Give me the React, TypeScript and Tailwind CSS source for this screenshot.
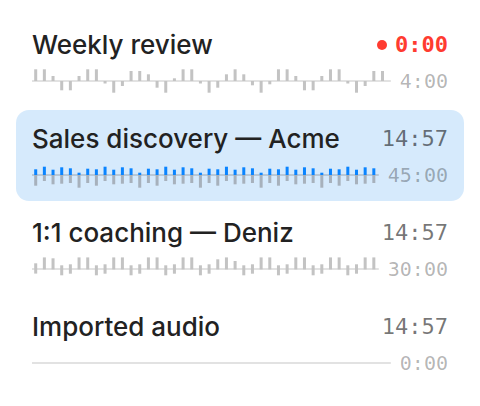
import React from "react";

type Bar = [number, number];

const r1base = [
  11.7, 11.7, 5, -9.3, -9.3, 5, 11.7, 11.7, -2.5, -11.7, -5, 10, 10, 6.7, -6.7,
  -11.7, 2.7, 11.7, 11.7, -2.5, -11.7, -6.7, 6.7, 11.7, 6.7, -4.3, -11.7, -3.3,
];
const row1: Bar[] = Array.from({ length: 41 }, (_, i) => {
  const v = r1base[i % 28];
  return v > 0 ? [v, 0] : [0, -v];
});

const r2base: Bar[] = [
  [5.7, 10.7],
  [8.3, 6],
  [5.3, 9.3],
  [7.7, 8.7],
  [6.7, 8],
  [2.3, 12.7],
  [6.3, 8],
];
const row2: Bar[] = Array.from({ length: 40 }, (_, i) => r2base[i % 7]);

const U: Bar = [11.6, 0.4];
const U2: Bar = [10.7, 0.4];
const D1: Bar = [3.7, 6.3];
const D2: Bar = [4.7, 4.7];
const M: Bar = [5.7, 4.6];
const row3: Bar[] = [
  M, U, U2, D1, D2, U, U, D1, D2, U, U, D1, D2, U, U, D1, D2, U, U, D1, D2,
  [9.7, 0.4], U, [8, 0.4], D1, D2, U, U, D1, D2, U, U, D1, D2, U, U, D1, D2, U, U,
];

type Kind = "plain" | "dual" | "empty";

function Wave({ bars, kind }: { bars: Bar[]; kind: Kind }) {
  const selected = kind === "dual";
  const line = selected ? "#b9c8d7" : "#e2e2e2";
  return (
    <svg className="block h-[28px] min-w-0 flex-1" aria-hidden="true">
      <rect x="0" y="13" width="100%" height="2" fill={line} />
      {bars.map(([a, b], i) => {
        const x = 2.2 + i * 8.67;
        if (selected) {
          return (
            <g key={i}>
              <rect x={x} y={14 - a} width="3" height={a} fill="#0a84ff" />
              <rect x={x} y={14} width="3" height={b} fill="#a7b1bc" />
            </g>
          );
        }
        return (
          <rect key={i} x={x} y={14 - a} width="3" height={a + b} fill="#c3c3c3" />
        );
      })}
    </svg>
  );
}

type Row = {
  title: string;
  time: React.ReactNode;
  total: string;
  bars: Bar[];
  kind: Kind;
};

const rows: Row[] = [
  {
    title: "Weekly review",
    time: (
      <span className="flex items-center gap-2">
        <span className="block h-[10px] w-[10px] rounded-full bg-[#ff3b30]" />
        <span className="font-bold text-[#ff3b30]">0:00</span>
      </span>
    ),
    total: "4:00",
    bars: row1,
    kind: "plain",
  },
  {
    title: "Sales discovery — Acme",
    time: "14:57",
    total: "45:00",
    bars: row2,
    kind: "dual",
  },
  {
    title: "1:1 coaching — Deniz",
    time: "14:57",
    total: "30:00",
    bars: row3,
    kind: "plain",
  },
  {
    title: "Imported audio",
    time: "14:57",
    total: "0:00",
    bars: [],
    kind: "empty",
  },
];

export default function App() {
  return (
    <div className="flex h-[406px] w-[480px] flex-col gap-[3px] bg-white px-4 pt-4 font-['Inter','Noto_Sans',sans-serif]">
      {rows.map((r) => (
        <div
          key={r.title}
          className={
            r.kind === "dual"
              ? "h-[91px] rounded-[13px] bg-[#d6eafc] px-4 pt-[13px]"
              : "h-[91px] rounded-[13px] px-4 pt-[13px]"
          }
        >
          <div className="flex h-[32px] items-center justify-between">
            <span className="text-[26px] font-medium leading-[32px] text-[#222222]">
              {r.title}
            </span>
            <span className="font-['DejaVu_Sans_Mono',monospace] text-[22px] leading-[32px] text-black/55">
              {r.time}
            </span>
          </div>
          <div className="mt-[8px] flex h-[24px] items-center gap-[9px]">
            <Wave bars={r.bars} kind={r.kind} />
            <span className="font-['DejaVu_Sans_Mono',monospace] text-[20px] leading-[24px] text-black/30">
              {r.total}
            </span>
          </div>
        </div>
      ))}
    </div>
  );
}
